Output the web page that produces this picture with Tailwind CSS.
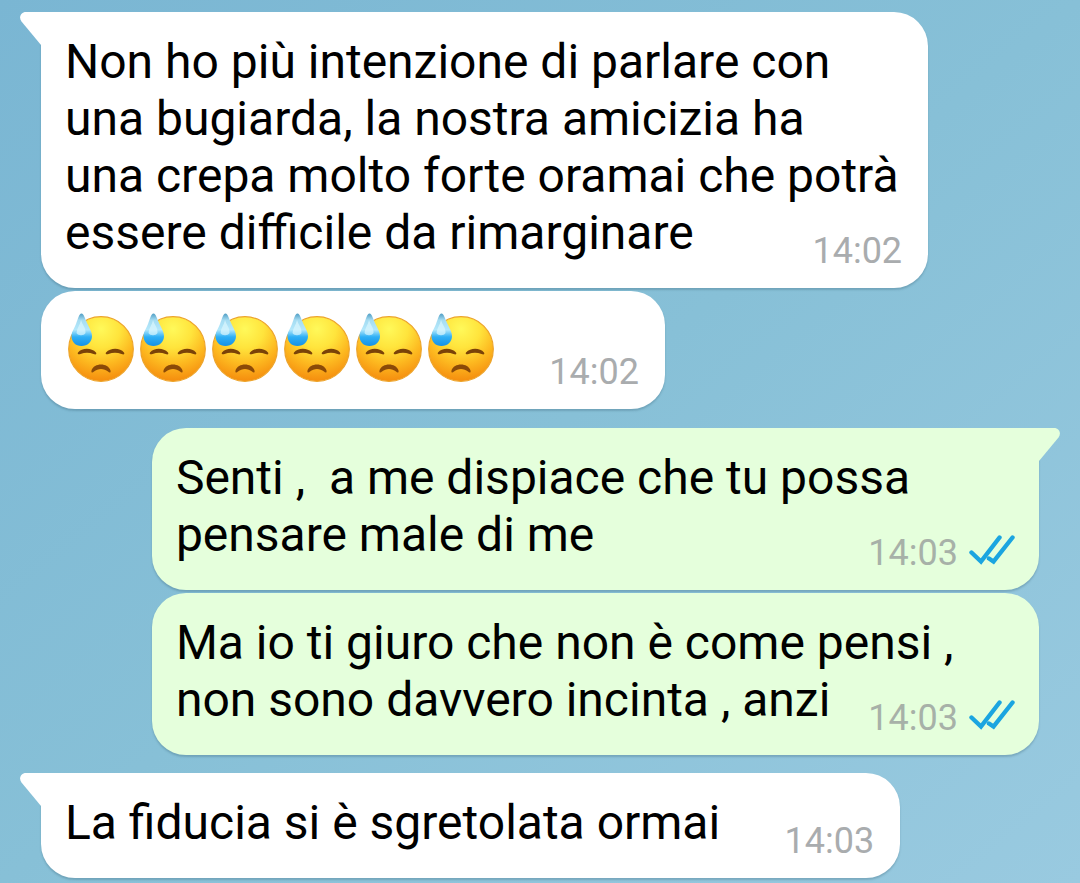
<!DOCTYPE html>
<html lang="it">

<head>
    <meta charset="UTF-8" />
    <meta name="viewport" content="width=device-width, initial-scale=1.0" />
    <title>Chat</title>
    <script src="https://cdn.jsdelivr.net/npm/@tailwindcss/browser@4"></script>
</head>

<body class="min-h-screen bg-linear-to-br from-[#7ab6d3] via-[#87c0d7] to-[#99cae0] font-[Roboto,sans-serif] text-[48px] leading-[57px] text-black">
    <!-- shared icons -->
    <svg class="absolute size-0">
        <defs>
            <radialGradient id="face" cx="36" cy="16" r="54" gradientUnits="userSpaceOnUse">
                <stop offset="0" stop-color="#fff95a" />
                <stop offset="0.35" stop-color="#ffe43c" />
                <stop offset="0.65" stop-color="#fdb920" />
                <stop offset="1" stop-color="#f4880c" />
            </radialGradient>
            <linearGradient id="drop" x1="0" y1="0" x2="0" y2="1">
                <stop offset="0" stop-color="#4f9dc4" />
                <stop offset="0.2" stop-color="#a5dcf2" />
                <stop offset="0.5" stop-color="#b4e8fb" />
                <stop offset="0.72" stop-color="#2fb0f6" />
                <stop offset="1" stop-color="#1591e6" />
            </linearGradient>
            <symbol id="sweat" viewBox="0 0 72 72">
                <circle cx="36" cy="36" r="32.3" fill="url(#face)" stroke="#eda42a" stroke-width="1.2" />
                <path d="M13 39.500C17 34.500 26.500 34.500 31 39.500C32 41.500 30.500 41.800 28.500 41C24 39.300 20 39.300 15.500 41C13.500 41.800 12 41 13 39.500Z" fill="#7a4208" />
                <path d="M41 39.500C45.500 34.500 55 34.500 59 39.500C60 41.500 58.500 41.800 56.500 41C52 39.300 48 39.300 43.500 41C41.500 41.800 40 41 41 39.500Z" fill="#7a4208" />
                <path d="M26.500 57.500C29 49.500 43 49.500 45.500 57.500C46 60 44.500 60 43 58.500C39 55 33 55 29 58.500C27.500 60 26 60 26.500 57.500Z" fill="#8b4a08" />
                <path d="M16.500 .5C19 .5 20 6 22.500 11C25 16 27 19 27 23C27 29 22.500 33 16.500 33C10.500 33 6.500 29 6.500 23C6.500 19 9 16 11 11C13 6 14 .5 16.500 .5Z" fill="url(#drop)" />
                <path d="M16 7C17.500 12 21 15 20.500 20C19 23 13 23 11.500 20C12 15 15 12 16 7Z" fill="#dcf6fe" opacity=".7" />
            </symbol>
            <symbol id="tail" viewBox="0 0 42 36">
                <path d="M42 0H6C.5 0-1.500 5.500 1.500 9.500L21 33H42Z" fill="currentColor" />
            </symbol>
            <symbol id="read" viewBox="0 0 46 30">
                <path d="M2.500 17.500L12 26.500L30.500 2.500M20 23.500L24.500 26.500L43.500 2.500" fill="none" stroke="currentColor" stroke-width="4.400" stroke-linecap="round" />
            </symbol>
        </defs>
    </svg>

    <main class="flex flex-col px-[41px] pt-3 pb-[5px]">
        <div class="relative w-8/9 rounded-[34px] rounded-tl-none bg-white pt-[21px] pr-6 pb-[27px] pl-6 shadow-[0_2px_2px_rgba(40,80,100,0.25)]">
            <svg class="absolute top-0 -left-[21px] h-9 w-[42px] text-white"><use href="#tail" /></svg>
            <p class="relative whitespace-nowrap">Non ho più intenzione di parlare con<br>una bugiarda, la nostra amicizia ha<br>una crepa molto forte oramai che potrà<br>essere difficile da rimarginare</p>
            <time class="absolute right-[26px] bottom-4 text-4xl/[42px] text-[#a9acae]">14:02</time>
        </div>

        <div class="relative mt-[3px] flex w-fit rounded-[34px] bg-white pt-[22px] pr-[168px] pb-6 pl-6 shadow-[0_2px_2px_rgba(40,80,100,0.25)]">
            <svg class="size-[72px]" role="img" aria-label="😓"><use href="#sweat" /></svg>
            <svg class="size-[72px]" role="img" aria-label="😓"><use href="#sweat" /></svg>
            <svg class="size-[72px]" role="img" aria-label="😓"><use href="#sweat" /></svg>
            <svg class="size-[72px]" role="img" aria-label="😓"><use href="#sweat" /></svg>
            <svg class="size-[72px]" role="img" aria-label="😓"><use href="#sweat" /></svg>
            <svg class="size-[72px]" role="img" aria-label="😓"><use href="#sweat" /></svg>
            <time class="absolute right-[26px] bottom-4 text-4xl/[42px] text-[#a9acae]">14:02</time>
        </div>

        <div class="relative mt-[19px] w-8/9 self-end rounded-[34px] rounded-tr-none bg-[#e5ffdc] pt-[21px] pr-6 pb-[27px] pl-6 shadow-[0_2px_2px_rgba(40,80,100,0.25)]">
            <svg class="absolute top-0 -right-[21px] h-9 w-[42px] -scale-x-100 text-[#e5ffdc]"><use href="#tail" /></svg>
            <p class="relative whitespace-pre">Senti ,  a me dispiace che tu possa<br>pensare male di me</p>
            <div class="absolute right-6 bottom-4 flex gap-[11px]">
                <time class="text-4xl/[42px] text-[#a7b1a8]">14:03</time>
                <svg class="mt-[3px] h-[30px] w-[46px] text-[#1ba5e0]" role="img" aria-label="Letto"><use href="#read" /></svg>
            </div>
        </div>

        <div class="relative mt-[3px] w-8/9 self-end rounded-[34px] bg-[#e5ffdc] pt-[21px] pr-6 pb-[27px] pl-6 shadow-[0_2px_2px_rgba(40,80,100,0.25)]">
            <p class="whitespace-nowrap">Ma io ti giuro che non è come pensi ,<br>non sono davvero incinta , anzi</p>
            <div class="absolute right-6 bottom-4 flex gap-[11px]">
                <time class="text-4xl/[42px] text-[#a7b1a8]">14:03</time>
                <svg class="mt-[3px] h-[30px] w-[46px] text-[#1ba5e0]" role="img" aria-label="Letto"><use href="#read" /></svg>
            </div>
        </div>

        <div class="relative mt-[18px] w-fit rounded-[34px] rounded-tl-none bg-white pt-[21px] pr-[180px] pb-[27px] pl-6 shadow-[0_2px_2px_rgba(40,80,100,0.25)]">
            <svg class="absolute top-0 -left-[21px] h-9 w-[42px] text-white"><use href="#tail" /></svg>
            <p class="relative whitespace-nowrap">La fiducia si è sgretolata ormai</p>
            <time class="absolute right-[26px] bottom-4 text-4xl/[42px] text-[#a9acae]">14:03</time>
        </div>
    </main>
</body>

</html>
